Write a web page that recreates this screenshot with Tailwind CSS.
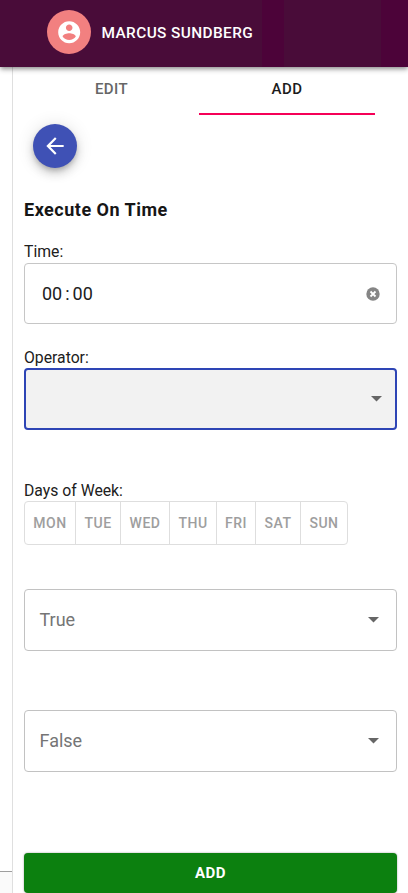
<!DOCTYPE html>
<html lang="en">
<head>
<meta charset="utf-8">
<title>Execute On Time</title>
<script src="https://cdn.jsdelivr.net/npm/@tailwindcss/browser@4"></script>
</head>
<body class="w-[408px] h-[893px] overflow-hidden flex flex-col bg-white text-[#202020] font-[Roboto,sans-serif]">
<header class="relative z-10 h-[67px] shrink-0 flex items-start pt-[10px] pl-[47px] bg-[linear-gradient(90deg,#490c39_262px,#4c0339_262px,#4c0339_284px,#490c39_284px,#490c39_381px,#4c0339_381px)] shadow-[0_2px_4px_-1px_rgba(0,0,0,.3),0_3px_5px_rgba(0,0,0,.22)]">
  <div class="size-11 rounded-full bg-[#f28080] flex items-center justify-center">
    <svg class="size-[26.4px] fill-white" viewBox="0 0 24 24"><path d="M12 2C6.48 2 2 6.48 2 12s4.480 10 10 10 10-4.480 10-10S17.520 2 12 2zm0 3c1.660 0 3 1.340 3 3s-1.340 3-3 3-3-1.340-3-3 1.340-3 3-3zm0 14.200c-2.500 0-4.710-1.280-6-3.220.03-1.990 4-3.080 6-3.080 1.990 0 5.970 1.090 6 3.080-1.290 1.940-3.500 3.220-6 3.220z"/></svg>
  </div>
  <span class="ml-[10.5px] pt-px h-11 leading-[44px] text-[15.4px] font-medium tracking-[0.4px] text-white whitespace-nowrap">MARCUS SUNDBERG</span>
</header>
<div class="flex flex-1 min-h-0">
  <aside class="w-3 shrink-0 flex flex-col"><div class="h-[804px]"></div><div class="flex-1 border-t border-[#9e9e9e] bg-[#fafafa]"></div></aside>
  <main class="flex-1 border-l border-[#dfdfdf] pl-[11px] pr-[11px] flex flex-col">
    <nav class="flex h-12 shrink-0 text-[15px] font-medium tracking-[0.45px] text-center">
      <div class="w-[175px] h-12 leading-[44px] text-[#666]">EDIT</div>
      <div class="w-[176px] h-12 leading-[44px] text-[#1c1c1c] border-b-2 border-[#f50057]">ADD</div>
    </nav>
    <button class="mt-[9px] ml-[8.5px] size-11 shrink-0 rounded-full bg-[#3f51b5] flex items-center justify-center shadow-[0_3px_5px_-1px_rgba(0,0,0,.2),0_6px_10px_rgba(0,0,0,.14),0_1px_18px_rgba(0,0,0,.12)]">
      <svg class="size-[26px] fill-white" viewBox="0 0 24 24"><path d="M20 11H7.830l5.590-5.590L12 4l-8 8 8 8 1.410-1.410L7.830 13H20v-2z"/></svg>
    </button>
    <h1 class="mt-[30px] h-6 shrink-0 leading-6 text-lg font-bold tracking-[0.5px] text-[#161616]">Execute On Time</h1>
    <label class="mt-5 h-[21px] shrink-0 leading-[20px] text-[15.75px]">Time:</label>
    <div class="h-[61px] shrink-0 rounded border border-[#c6c6c6] flex items-center justify-between pl-[17px] pr-[16.5px]">
      <span class="text-lg flex"><span>00</span><span class="px-[3px]">:</span><span>00</span></span>
      <svg class="size-[14px]" viewBox="0 0 14 14"><circle cx="7" cy="7" r="6.700" fill="#858585"/><path d="M4.500 4.500l5 5M9.500 4.500l-5 5" stroke="#fff" stroke-width="1.800"/></svg>
    </div>
    <label class="mt-6 h-[19.5px] shrink-0 leading-[20px] text-[15.75px]">Operator:</label>
    <div class="h-[62px] shrink-0 rounded border-2 border-[#2e45b5] bg-[#f2f2f2] flex items-center justify-end pr-[13px]">
      <svg class="w-[11px] h-[6px] fill-[#666]" viewBox="0 0 11 6"><path d="M0 0h11L5.500 5.500z"/></svg>
    </div>
    <label class="mt-[51.5px] h-5 shrink-0 leading-[20px] text-[15.75px]">Days of Week:</label>
    <div class="flex h-11 w-[324px] shrink-0 rounded border border-[#dedede] divide-x divide-[#dedede] text-center leading-[42px] text-[14px] font-medium tracking-[0.5px] text-[#9e9e9e]">
      <span class="w-[51px]">MON</span><span class="w-[45px]">TUE</span><span class="w-[49px]">WED</span><span class="w-[47px]">THU</span><span class="w-[39px]">FRI</span><span class="w-[45px]">SAT</span><span class="w-[46px]">SUN</span>
    </div>
    <div class="mt-11 h-[62px] shrink-0 rounded border border-[#c2c2c2] flex items-center justify-between pl-[14.5px] pr-[17px]">
      <span class="text-lg leading-6 text-[#757575]">True</span>
      <svg class="w-[11px] h-[6px] fill-[#666]" viewBox="0 0 11 6"><path d="M0 0h11L5.500 5.500z"/></svg>
    </div>
    <div class="mt-[59px] h-[62px] shrink-0 rounded border border-[#c2c2c2] flex items-center justify-between pl-[14.5px] pr-[17px]">
      <span class="text-lg leading-6 text-[#757575]">False</span>
      <svg class="w-[11px] h-[6px] fill-[#666]" viewBox="0 0 11 6"><path d="M0 0h11L5.500 5.500z"/></svg>
    </div>
    <button class="mt-[81px] h-10 shrink-0 rounded bg-[#0c800f] text-white text-[15px] font-bold tracking-[0.5px] leading-10 shadow-[0_0_2px_rgba(0,0,0,.4)]">ADD</button>
  </main>
</div>
</body>
</html>
